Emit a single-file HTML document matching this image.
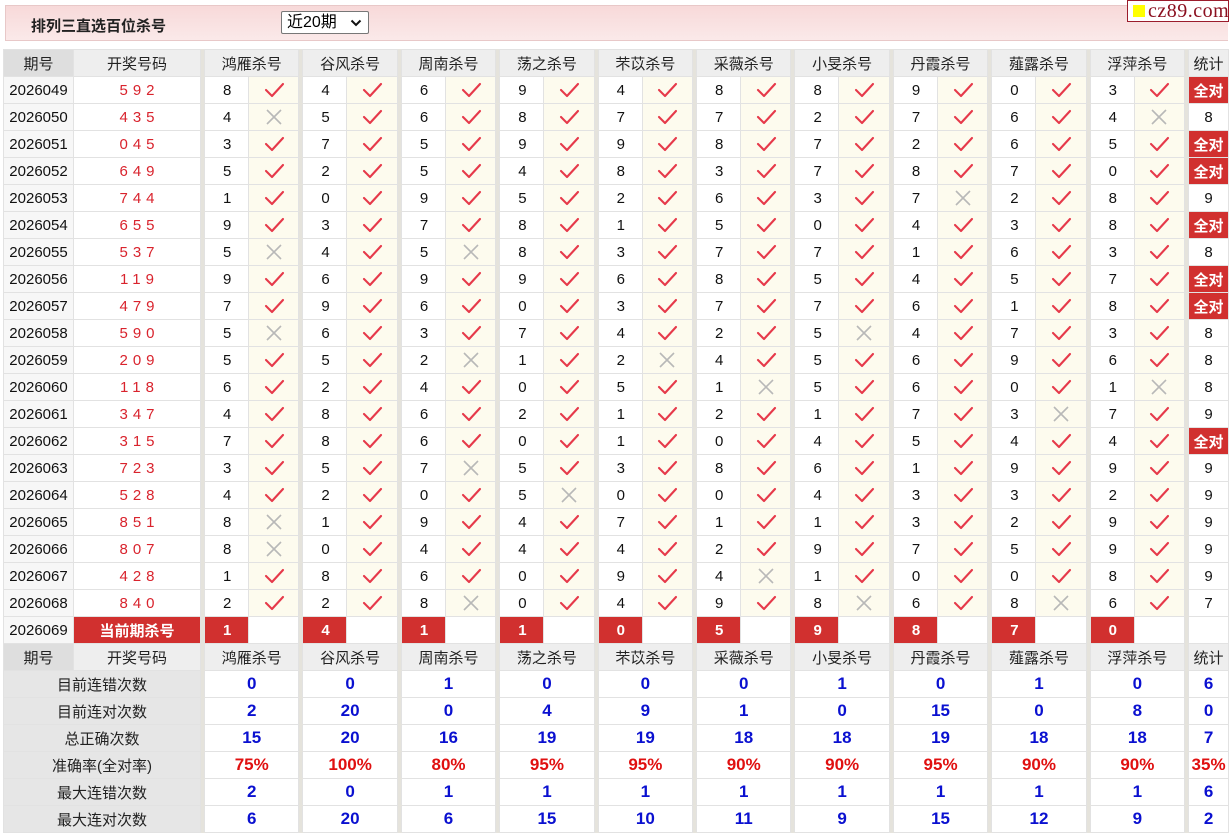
<!DOCTYPE html>
<html><head><meta charset="utf-8">
<style>
body{margin:0;background:#fff;font-family:"Liberation Sans","Noto Sans CJK SC",sans-serif;width:1231px;height:833px;overflow:hidden;position:relative}
.top{position:absolute;left:5px;top:5px;width:1222px;height:34px;background:linear-gradient(#f7d9d9,#fbe9e9);border:1px solid #e8c8c8;border-right:none}
.title{position:absolute;left:25px;top:9px;font-weight:bold;font-size:15px;color:#222}
.sel{position:absolute;left:275px;top:5px;border:1px solid #777;background:#fff;border-radius:2px;font-size:16px;line-height:21px;padding-left:5px;box-sizing:border-box;width:88px;height:23px}
.sel svg{position:absolute;right:6px;top:7px}
.logo{position:absolute;left:1127px;top:0;width:100px;height:20px;border:1px solid #9b1c2c;background:#fff;font-family:"Liberation Serif",serif;font-size:20px;color:#8b1020;line-height:20px;letter-spacing:0.5px;white-space:nowrap}
.logo i{display:inline-block;width:12px;height:12px;background:#ff0;margin:0 3px 0 5px}
table{position:absolute;left:3px;top:49px;border-collapse:collapse;table-layout:fixed;width:1225px}
td{border:1px solid #e2e2e2;height:26px;padding:0;font-size:15px;color:#111;text-align:center;overflow:hidden;white-space:nowrap}
td.p{background:#f7f7f7}
td.d{color:#d9232d;letter-spacing:5px;padding-left:5px}
td.g{background:#e5e3dc;border-top-color:#e5e3dc;border-bottom-color:#e5e3dc}
td.n{text-align:left;padding-left:18px}
td.i{background:#fdfbee}
td.i svg{width:24px;height:20px;vertical-align:middle}
tr.h td{background:#eeeeee;color:#222}
tr.h td.q{background:#dedede}
tr.h td.g{background:#e5e3dc}
td.a{background:#d1302f;color:#fff;font-weight:bold}
td.c{background:#d1302f;color:#fff;font-weight:bold;text-align:left;padding-left:18px}
td.l{background:#e6e6e6;color:#222}
td.s{color:#0a10d0;font-weight:bold;font-size:17px}
td.r{color:#e01010;font-weight:bold;font-size:17px}
</style></head><body>
<svg width="0" height="0" style="position:absolute"><defs>
<symbol id="k" viewBox="0 0 24 20"><path d="M4 10 L10 16 L21 4" fill="none" stroke="#e6394a" stroke-width="2.1" stroke-linecap="round" stroke-linejoin="round"/></symbol>
<symbol id="x" viewBox="0 0 24 20"><path d="M5 3 L19 17 M19 3 L5 17" fill="none" stroke="#b8b8b8" stroke-width="1.6"/></symbol>
</defs></svg>
<div class="top"><div class="title">排列三直选百位杀号</div><div class="sel">近20期<svg width="12" height="8" viewBox="0 0 12 8"><path d="M1.5 1.5 L6 6 L10.5 1.5" fill="none" stroke="#111" stroke-width="2"/></svg></div></div>
<div class="logo"><i></i>cz89.com</div>
<table>
<colgroup><col style="width:70px"><col style="width:127px"><col style="width:4px">
<col style="width:44px"><col style="width:50.4px"><col style="width:4px">
<col style="width:44px"><col style="width:50.4px"><col style="width:4px">
<col style="width:44px"><col style="width:50.4px"><col style="width:4px">
<col style="width:44px"><col style="width:50.4px"><col style="width:4px">
<col style="width:44px"><col style="width:50.4px"><col style="width:4px">
<col style="width:44px"><col style="width:50.4px"><col style="width:4px">
<col style="width:44px"><col style="width:50.4px"><col style="width:4px">
<col style="width:44px"><col style="width:50.4px"><col style="width:4px">
<col style="width:44px"><col style="width:50.4px"><col style="width:4px">
<col style="width:44px"><col style="width:50.4px"><col style="width:4px">
<col style="width:40px"></colgroup>
<tr class="h"><td class="q">期号</td><td>开奖号码</td><td class="g"></td><td colspan="2">鸿雁杀号</td><td class="g"></td><td colspan="2">谷风杀号</td><td class="g"></td><td colspan="2">周南杀号</td><td class="g"></td><td colspan="2">荡之杀号</td><td class="g"></td><td colspan="2">芣苡杀号</td><td class="g"></td><td colspan="2">采薇杀号</td><td class="g"></td><td colspan="2">小旻杀号</td><td class="g"></td><td colspan="2">丹霞杀号</td><td class="g"></td><td colspan="2">薤露杀号</td><td class="g"></td><td colspan="2">浮萍杀号</td><td class="g"></td><td>统计</td></tr>
<tr><td class="p">2026049</td><td class="d">592</td><td class="g"></td><td class="n">8</td><td class="i"><svg><use href="#k"/></svg></td><td class="g"></td><td class="n">4</td><td class="i"><svg><use href="#k"/></svg></td><td class="g"></td><td class="n">6</td><td class="i"><svg><use href="#k"/></svg></td><td class="g"></td><td class="n">9</td><td class="i"><svg><use href="#k"/></svg></td><td class="g"></td><td class="n">4</td><td class="i"><svg><use href="#k"/></svg></td><td class="g"></td><td class="n">8</td><td class="i"><svg><use href="#k"/></svg></td><td class="g"></td><td class="n">8</td><td class="i"><svg><use href="#k"/></svg></td><td class="g"></td><td class="n">9</td><td class="i"><svg><use href="#k"/></svg></td><td class="g"></td><td class="n">0</td><td class="i"><svg><use href="#k"/></svg></td><td class="g"></td><td class="n">3</td><td class="i"><svg><use href="#k"/></svg></td><td class="g"></td><td class="a">全对</td></tr>
<tr><td class="p">2026050</td><td class="d">435</td><td class="g"></td><td class="n">4</td><td class="i"><svg><use href="#x"/></svg></td><td class="g"></td><td class="n">5</td><td class="i"><svg><use href="#k"/></svg></td><td class="g"></td><td class="n">6</td><td class="i"><svg><use href="#k"/></svg></td><td class="g"></td><td class="n">8</td><td class="i"><svg><use href="#k"/></svg></td><td class="g"></td><td class="n">7</td><td class="i"><svg><use href="#k"/></svg></td><td class="g"></td><td class="n">7</td><td class="i"><svg><use href="#k"/></svg></td><td class="g"></td><td class="n">2</td><td class="i"><svg><use href="#k"/></svg></td><td class="g"></td><td class="n">7</td><td class="i"><svg><use href="#k"/></svg></td><td class="g"></td><td class="n">6</td><td class="i"><svg><use href="#k"/></svg></td><td class="g"></td><td class="n">4</td><td class="i"><svg><use href="#x"/></svg></td><td class="g"></td><td>8</td></tr>
<tr><td class="p">2026051</td><td class="d">045</td><td class="g"></td><td class="n">3</td><td class="i"><svg><use href="#k"/></svg></td><td class="g"></td><td class="n">7</td><td class="i"><svg><use href="#k"/></svg></td><td class="g"></td><td class="n">5</td><td class="i"><svg><use href="#k"/></svg></td><td class="g"></td><td class="n">9</td><td class="i"><svg><use href="#k"/></svg></td><td class="g"></td><td class="n">9</td><td class="i"><svg><use href="#k"/></svg></td><td class="g"></td><td class="n">8</td><td class="i"><svg><use href="#k"/></svg></td><td class="g"></td><td class="n">7</td><td class="i"><svg><use href="#k"/></svg></td><td class="g"></td><td class="n">2</td><td class="i"><svg><use href="#k"/></svg></td><td class="g"></td><td class="n">6</td><td class="i"><svg><use href="#k"/></svg></td><td class="g"></td><td class="n">5</td><td class="i"><svg><use href="#k"/></svg></td><td class="g"></td><td class="a">全对</td></tr>
<tr><td class="p">2026052</td><td class="d">649</td><td class="g"></td><td class="n">5</td><td class="i"><svg><use href="#k"/></svg></td><td class="g"></td><td class="n">2</td><td class="i"><svg><use href="#k"/></svg></td><td class="g"></td><td class="n">5</td><td class="i"><svg><use href="#k"/></svg></td><td class="g"></td><td class="n">4</td><td class="i"><svg><use href="#k"/></svg></td><td class="g"></td><td class="n">8</td><td class="i"><svg><use href="#k"/></svg></td><td class="g"></td><td class="n">3</td><td class="i"><svg><use href="#k"/></svg></td><td class="g"></td><td class="n">7</td><td class="i"><svg><use href="#k"/></svg></td><td class="g"></td><td class="n">8</td><td class="i"><svg><use href="#k"/></svg></td><td class="g"></td><td class="n">7</td><td class="i"><svg><use href="#k"/></svg></td><td class="g"></td><td class="n">0</td><td class="i"><svg><use href="#k"/></svg></td><td class="g"></td><td class="a">全对</td></tr>
<tr><td class="p">2026053</td><td class="d">744</td><td class="g"></td><td class="n">1</td><td class="i"><svg><use href="#k"/></svg></td><td class="g"></td><td class="n">0</td><td class="i"><svg><use href="#k"/></svg></td><td class="g"></td><td class="n">9</td><td class="i"><svg><use href="#k"/></svg></td><td class="g"></td><td class="n">5</td><td class="i"><svg><use href="#k"/></svg></td><td class="g"></td><td class="n">2</td><td class="i"><svg><use href="#k"/></svg></td><td class="g"></td><td class="n">6</td><td class="i"><svg><use href="#k"/></svg></td><td class="g"></td><td class="n">3</td><td class="i"><svg><use href="#k"/></svg></td><td class="g"></td><td class="n">7</td><td class="i"><svg><use href="#x"/></svg></td><td class="g"></td><td class="n">2</td><td class="i"><svg><use href="#k"/></svg></td><td class="g"></td><td class="n">8</td><td class="i"><svg><use href="#k"/></svg></td><td class="g"></td><td>9</td></tr>
<tr><td class="p">2026054</td><td class="d">655</td><td class="g"></td><td class="n">9</td><td class="i"><svg><use href="#k"/></svg></td><td class="g"></td><td class="n">3</td><td class="i"><svg><use href="#k"/></svg></td><td class="g"></td><td class="n">7</td><td class="i"><svg><use href="#k"/></svg></td><td class="g"></td><td class="n">8</td><td class="i"><svg><use href="#k"/></svg></td><td class="g"></td><td class="n">1</td><td class="i"><svg><use href="#k"/></svg></td><td class="g"></td><td class="n">5</td><td class="i"><svg><use href="#k"/></svg></td><td class="g"></td><td class="n">0</td><td class="i"><svg><use href="#k"/></svg></td><td class="g"></td><td class="n">4</td><td class="i"><svg><use href="#k"/></svg></td><td class="g"></td><td class="n">3</td><td class="i"><svg><use href="#k"/></svg></td><td class="g"></td><td class="n">8</td><td class="i"><svg><use href="#k"/></svg></td><td class="g"></td><td class="a">全对</td></tr>
<tr><td class="p">2026055</td><td class="d">537</td><td class="g"></td><td class="n">5</td><td class="i"><svg><use href="#x"/></svg></td><td class="g"></td><td class="n">4</td><td class="i"><svg><use href="#k"/></svg></td><td class="g"></td><td class="n">5</td><td class="i"><svg><use href="#x"/></svg></td><td class="g"></td><td class="n">8</td><td class="i"><svg><use href="#k"/></svg></td><td class="g"></td><td class="n">3</td><td class="i"><svg><use href="#k"/></svg></td><td class="g"></td><td class="n">7</td><td class="i"><svg><use href="#k"/></svg></td><td class="g"></td><td class="n">7</td><td class="i"><svg><use href="#k"/></svg></td><td class="g"></td><td class="n">1</td><td class="i"><svg><use href="#k"/></svg></td><td class="g"></td><td class="n">6</td><td class="i"><svg><use href="#k"/></svg></td><td class="g"></td><td class="n">3</td><td class="i"><svg><use href="#k"/></svg></td><td class="g"></td><td>8</td></tr>
<tr><td class="p">2026056</td><td class="d">119</td><td class="g"></td><td class="n">9</td><td class="i"><svg><use href="#k"/></svg></td><td class="g"></td><td class="n">6</td><td class="i"><svg><use href="#k"/></svg></td><td class="g"></td><td class="n">9</td><td class="i"><svg><use href="#k"/></svg></td><td class="g"></td><td class="n">9</td><td class="i"><svg><use href="#k"/></svg></td><td class="g"></td><td class="n">6</td><td class="i"><svg><use href="#k"/></svg></td><td class="g"></td><td class="n">8</td><td class="i"><svg><use href="#k"/></svg></td><td class="g"></td><td class="n">5</td><td class="i"><svg><use href="#k"/></svg></td><td class="g"></td><td class="n">4</td><td class="i"><svg><use href="#k"/></svg></td><td class="g"></td><td class="n">5</td><td class="i"><svg><use href="#k"/></svg></td><td class="g"></td><td class="n">7</td><td class="i"><svg><use href="#k"/></svg></td><td class="g"></td><td class="a">全对</td></tr>
<tr><td class="p">2026057</td><td class="d">479</td><td class="g"></td><td class="n">7</td><td class="i"><svg><use href="#k"/></svg></td><td class="g"></td><td class="n">9</td><td class="i"><svg><use href="#k"/></svg></td><td class="g"></td><td class="n">6</td><td class="i"><svg><use href="#k"/></svg></td><td class="g"></td><td class="n">0</td><td class="i"><svg><use href="#k"/></svg></td><td class="g"></td><td class="n">3</td><td class="i"><svg><use href="#k"/></svg></td><td class="g"></td><td class="n">7</td><td class="i"><svg><use href="#k"/></svg></td><td class="g"></td><td class="n">7</td><td class="i"><svg><use href="#k"/></svg></td><td class="g"></td><td class="n">6</td><td class="i"><svg><use href="#k"/></svg></td><td class="g"></td><td class="n">1</td><td class="i"><svg><use href="#k"/></svg></td><td class="g"></td><td class="n">8</td><td class="i"><svg><use href="#k"/></svg></td><td class="g"></td><td class="a">全对</td></tr>
<tr><td class="p">2026058</td><td class="d">590</td><td class="g"></td><td class="n">5</td><td class="i"><svg><use href="#x"/></svg></td><td class="g"></td><td class="n">6</td><td class="i"><svg><use href="#k"/></svg></td><td class="g"></td><td class="n">3</td><td class="i"><svg><use href="#k"/></svg></td><td class="g"></td><td class="n">7</td><td class="i"><svg><use href="#k"/></svg></td><td class="g"></td><td class="n">4</td><td class="i"><svg><use href="#k"/></svg></td><td class="g"></td><td class="n">2</td><td class="i"><svg><use href="#k"/></svg></td><td class="g"></td><td class="n">5</td><td class="i"><svg><use href="#x"/></svg></td><td class="g"></td><td class="n">4</td><td class="i"><svg><use href="#k"/></svg></td><td class="g"></td><td class="n">7</td><td class="i"><svg><use href="#k"/></svg></td><td class="g"></td><td class="n">3</td><td class="i"><svg><use href="#k"/></svg></td><td class="g"></td><td>8</td></tr>
<tr><td class="p">2026059</td><td class="d">209</td><td class="g"></td><td class="n">5</td><td class="i"><svg><use href="#k"/></svg></td><td class="g"></td><td class="n">5</td><td class="i"><svg><use href="#k"/></svg></td><td class="g"></td><td class="n">2</td><td class="i"><svg><use href="#x"/></svg></td><td class="g"></td><td class="n">1</td><td class="i"><svg><use href="#k"/></svg></td><td class="g"></td><td class="n">2</td><td class="i"><svg><use href="#x"/></svg></td><td class="g"></td><td class="n">4</td><td class="i"><svg><use href="#k"/></svg></td><td class="g"></td><td class="n">5</td><td class="i"><svg><use href="#k"/></svg></td><td class="g"></td><td class="n">6</td><td class="i"><svg><use href="#k"/></svg></td><td class="g"></td><td class="n">9</td><td class="i"><svg><use href="#k"/></svg></td><td class="g"></td><td class="n">6</td><td class="i"><svg><use href="#k"/></svg></td><td class="g"></td><td>8</td></tr>
<tr><td class="p">2026060</td><td class="d">118</td><td class="g"></td><td class="n">6</td><td class="i"><svg><use href="#k"/></svg></td><td class="g"></td><td class="n">2</td><td class="i"><svg><use href="#k"/></svg></td><td class="g"></td><td class="n">4</td><td class="i"><svg><use href="#k"/></svg></td><td class="g"></td><td class="n">0</td><td class="i"><svg><use href="#k"/></svg></td><td class="g"></td><td class="n">5</td><td class="i"><svg><use href="#k"/></svg></td><td class="g"></td><td class="n">1</td><td class="i"><svg><use href="#x"/></svg></td><td class="g"></td><td class="n">5</td><td class="i"><svg><use href="#k"/></svg></td><td class="g"></td><td class="n">6</td><td class="i"><svg><use href="#k"/></svg></td><td class="g"></td><td class="n">0</td><td class="i"><svg><use href="#k"/></svg></td><td class="g"></td><td class="n">1</td><td class="i"><svg><use href="#x"/></svg></td><td class="g"></td><td>8</td></tr>
<tr><td class="p">2026061</td><td class="d">347</td><td class="g"></td><td class="n">4</td><td class="i"><svg><use href="#k"/></svg></td><td class="g"></td><td class="n">8</td><td class="i"><svg><use href="#k"/></svg></td><td class="g"></td><td class="n">6</td><td class="i"><svg><use href="#k"/></svg></td><td class="g"></td><td class="n">2</td><td class="i"><svg><use href="#k"/></svg></td><td class="g"></td><td class="n">1</td><td class="i"><svg><use href="#k"/></svg></td><td class="g"></td><td class="n">2</td><td class="i"><svg><use href="#k"/></svg></td><td class="g"></td><td class="n">1</td><td class="i"><svg><use href="#k"/></svg></td><td class="g"></td><td class="n">7</td><td class="i"><svg><use href="#k"/></svg></td><td class="g"></td><td class="n">3</td><td class="i"><svg><use href="#x"/></svg></td><td class="g"></td><td class="n">7</td><td class="i"><svg><use href="#k"/></svg></td><td class="g"></td><td>9</td></tr>
<tr><td class="p">2026062</td><td class="d">315</td><td class="g"></td><td class="n">7</td><td class="i"><svg><use href="#k"/></svg></td><td class="g"></td><td class="n">8</td><td class="i"><svg><use href="#k"/></svg></td><td class="g"></td><td class="n">6</td><td class="i"><svg><use href="#k"/></svg></td><td class="g"></td><td class="n">0</td><td class="i"><svg><use href="#k"/></svg></td><td class="g"></td><td class="n">1</td><td class="i"><svg><use href="#k"/></svg></td><td class="g"></td><td class="n">0</td><td class="i"><svg><use href="#k"/></svg></td><td class="g"></td><td class="n">4</td><td class="i"><svg><use href="#k"/></svg></td><td class="g"></td><td class="n">5</td><td class="i"><svg><use href="#k"/></svg></td><td class="g"></td><td class="n">4</td><td class="i"><svg><use href="#k"/></svg></td><td class="g"></td><td class="n">4</td><td class="i"><svg><use href="#k"/></svg></td><td class="g"></td><td class="a">全对</td></tr>
<tr><td class="p">2026063</td><td class="d">723</td><td class="g"></td><td class="n">3</td><td class="i"><svg><use href="#k"/></svg></td><td class="g"></td><td class="n">5</td><td class="i"><svg><use href="#k"/></svg></td><td class="g"></td><td class="n">7</td><td class="i"><svg><use href="#x"/></svg></td><td class="g"></td><td class="n">5</td><td class="i"><svg><use href="#k"/></svg></td><td class="g"></td><td class="n">3</td><td class="i"><svg><use href="#k"/></svg></td><td class="g"></td><td class="n">8</td><td class="i"><svg><use href="#k"/></svg></td><td class="g"></td><td class="n">6</td><td class="i"><svg><use href="#k"/></svg></td><td class="g"></td><td class="n">1</td><td class="i"><svg><use href="#k"/></svg></td><td class="g"></td><td class="n">9</td><td class="i"><svg><use href="#k"/></svg></td><td class="g"></td><td class="n">9</td><td class="i"><svg><use href="#k"/></svg></td><td class="g"></td><td>9</td></tr>
<tr><td class="p">2026064</td><td class="d">528</td><td class="g"></td><td class="n">4</td><td class="i"><svg><use href="#k"/></svg></td><td class="g"></td><td class="n">2</td><td class="i"><svg><use href="#k"/></svg></td><td class="g"></td><td class="n">0</td><td class="i"><svg><use href="#k"/></svg></td><td class="g"></td><td class="n">5</td><td class="i"><svg><use href="#x"/></svg></td><td class="g"></td><td class="n">0</td><td class="i"><svg><use href="#k"/></svg></td><td class="g"></td><td class="n">0</td><td class="i"><svg><use href="#k"/></svg></td><td class="g"></td><td class="n">4</td><td class="i"><svg><use href="#k"/></svg></td><td class="g"></td><td class="n">3</td><td class="i"><svg><use href="#k"/></svg></td><td class="g"></td><td class="n">3</td><td class="i"><svg><use href="#k"/></svg></td><td class="g"></td><td class="n">2</td><td class="i"><svg><use href="#k"/></svg></td><td class="g"></td><td>9</td></tr>
<tr><td class="p">2026065</td><td class="d">851</td><td class="g"></td><td class="n">8</td><td class="i"><svg><use href="#x"/></svg></td><td class="g"></td><td class="n">1</td><td class="i"><svg><use href="#k"/></svg></td><td class="g"></td><td class="n">9</td><td class="i"><svg><use href="#k"/></svg></td><td class="g"></td><td class="n">4</td><td class="i"><svg><use href="#k"/></svg></td><td class="g"></td><td class="n">7</td><td class="i"><svg><use href="#k"/></svg></td><td class="g"></td><td class="n">1</td><td class="i"><svg><use href="#k"/></svg></td><td class="g"></td><td class="n">1</td><td class="i"><svg><use href="#k"/></svg></td><td class="g"></td><td class="n">3</td><td class="i"><svg><use href="#k"/></svg></td><td class="g"></td><td class="n">2</td><td class="i"><svg><use href="#k"/></svg></td><td class="g"></td><td class="n">9</td><td class="i"><svg><use href="#k"/></svg></td><td class="g"></td><td>9</td></tr>
<tr><td class="p">2026066</td><td class="d">807</td><td class="g"></td><td class="n">8</td><td class="i"><svg><use href="#x"/></svg></td><td class="g"></td><td class="n">0</td><td class="i"><svg><use href="#k"/></svg></td><td class="g"></td><td class="n">4</td><td class="i"><svg><use href="#k"/></svg></td><td class="g"></td><td class="n">4</td><td class="i"><svg><use href="#k"/></svg></td><td class="g"></td><td class="n">4</td><td class="i"><svg><use href="#k"/></svg></td><td class="g"></td><td class="n">2</td><td class="i"><svg><use href="#k"/></svg></td><td class="g"></td><td class="n">9</td><td class="i"><svg><use href="#k"/></svg></td><td class="g"></td><td class="n">7</td><td class="i"><svg><use href="#k"/></svg></td><td class="g"></td><td class="n">5</td><td class="i"><svg><use href="#k"/></svg></td><td class="g"></td><td class="n">9</td><td class="i"><svg><use href="#k"/></svg></td><td class="g"></td><td>9</td></tr>
<tr><td class="p">2026067</td><td class="d">428</td><td class="g"></td><td class="n">1</td><td class="i"><svg><use href="#k"/></svg></td><td class="g"></td><td class="n">8</td><td class="i"><svg><use href="#k"/></svg></td><td class="g"></td><td class="n">6</td><td class="i"><svg><use href="#k"/></svg></td><td class="g"></td><td class="n">0</td><td class="i"><svg><use href="#k"/></svg></td><td class="g"></td><td class="n">9</td><td class="i"><svg><use href="#k"/></svg></td><td class="g"></td><td class="n">4</td><td class="i"><svg><use href="#x"/></svg></td><td class="g"></td><td class="n">1</td><td class="i"><svg><use href="#k"/></svg></td><td class="g"></td><td class="n">0</td><td class="i"><svg><use href="#k"/></svg></td><td class="g"></td><td class="n">0</td><td class="i"><svg><use href="#k"/></svg></td><td class="g"></td><td class="n">8</td><td class="i"><svg><use href="#k"/></svg></td><td class="g"></td><td>9</td></tr>
<tr><td class="p">2026068</td><td class="d">840</td><td class="g"></td><td class="n">2</td><td class="i"><svg><use href="#k"/></svg></td><td class="g"></td><td class="n">2</td><td class="i"><svg><use href="#k"/></svg></td><td class="g"></td><td class="n">8</td><td class="i"><svg><use href="#x"/></svg></td><td class="g"></td><td class="n">0</td><td class="i"><svg><use href="#k"/></svg></td><td class="g"></td><td class="n">4</td><td class="i"><svg><use href="#k"/></svg></td><td class="g"></td><td class="n">9</td><td class="i"><svg><use href="#k"/></svg></td><td class="g"></td><td class="n">8</td><td class="i"><svg><use href="#x"/></svg></td><td class="g"></td><td class="n">6</td><td class="i"><svg><use href="#k"/></svg></td><td class="g"></td><td class="n">8</td><td class="i"><svg><use href="#x"/></svg></td><td class="g"></td><td class="n">6</td><td class="i"><svg><use href="#k"/></svg></td><td class="g"></td><td>7</td></tr>
<tr><td class="p">2026069</td><td class="a">当前期杀号</td><td class="g"></td><td class="c">1</td><td></td><td class="g"></td><td class="c">4</td><td></td><td class="g"></td><td class="c">1</td><td></td><td class="g"></td><td class="c">1</td><td></td><td class="g"></td><td class="c">0</td><td></td><td class="g"></td><td class="c">5</td><td></td><td class="g"></td><td class="c">9</td><td></td><td class="g"></td><td class="c">8</td><td></td><td class="g"></td><td class="c">7</td><td></td><td class="g"></td><td class="c">0</td><td></td><td class="g"></td><td></td></tr>
<tr class="h"><td class="q">期号</td><td>开奖号码</td><td class="g"></td><td colspan="2">鸿雁杀号</td><td class="g"></td><td colspan="2">谷风杀号</td><td class="g"></td><td colspan="2">周南杀号</td><td class="g"></td><td colspan="2">荡之杀号</td><td class="g"></td><td colspan="2">芣苡杀号</td><td class="g"></td><td colspan="2">采薇杀号</td><td class="g"></td><td colspan="2">小旻杀号</td><td class="g"></td><td colspan="2">丹霞杀号</td><td class="g"></td><td colspan="2">薤露杀号</td><td class="g"></td><td colspan="2">浮萍杀号</td><td class="g"></td><td>统计</td></tr>
<tr><td class="l" colspan="2">目前连错次数</td><td class="g"></td><td class="s" colspan="2">0</td><td class="g"></td><td class="s" colspan="2">0</td><td class="g"></td><td class="s" colspan="2">1</td><td class="g"></td><td class="s" colspan="2">0</td><td class="g"></td><td class="s" colspan="2">0</td><td class="g"></td><td class="s" colspan="2">0</td><td class="g"></td><td class="s" colspan="2">1</td><td class="g"></td><td class="s" colspan="2">0</td><td class="g"></td><td class="s" colspan="2">1</td><td class="g"></td><td class="s" colspan="2">0</td><td class="g"></td><td class="s">6</td></tr>
<tr><td class="l" colspan="2">目前连对次数</td><td class="g"></td><td class="s" colspan="2">2</td><td class="g"></td><td class="s" colspan="2">20</td><td class="g"></td><td class="s" colspan="2">0</td><td class="g"></td><td class="s" colspan="2">4</td><td class="g"></td><td class="s" colspan="2">9</td><td class="g"></td><td class="s" colspan="2">1</td><td class="g"></td><td class="s" colspan="2">0</td><td class="g"></td><td class="s" colspan="2">15</td><td class="g"></td><td class="s" colspan="2">0</td><td class="g"></td><td class="s" colspan="2">8</td><td class="g"></td><td class="s">0</td></tr>
<tr><td class="l" colspan="2">总正确次数</td><td class="g"></td><td class="s" colspan="2">15</td><td class="g"></td><td class="s" colspan="2">20</td><td class="g"></td><td class="s" colspan="2">16</td><td class="g"></td><td class="s" colspan="2">19</td><td class="g"></td><td class="s" colspan="2">19</td><td class="g"></td><td class="s" colspan="2">18</td><td class="g"></td><td class="s" colspan="2">18</td><td class="g"></td><td class="s" colspan="2">19</td><td class="g"></td><td class="s" colspan="2">18</td><td class="g"></td><td class="s" colspan="2">18</td><td class="g"></td><td class="s">7</td></tr>
<tr><td class="l" colspan="2">准确率(全对率)</td><td class="g"></td><td class="r" colspan="2">75%</td><td class="g"></td><td class="r" colspan="2">100%</td><td class="g"></td><td class="r" colspan="2">80%</td><td class="g"></td><td class="r" colspan="2">95%</td><td class="g"></td><td class="r" colspan="2">95%</td><td class="g"></td><td class="r" colspan="2">90%</td><td class="g"></td><td class="r" colspan="2">90%</td><td class="g"></td><td class="r" colspan="2">95%</td><td class="g"></td><td class="r" colspan="2">90%</td><td class="g"></td><td class="r" colspan="2">90%</td><td class="g"></td><td class="r">35%</td></tr>
<tr><td class="l" colspan="2">最大连错次数</td><td class="g"></td><td class="s" colspan="2">2</td><td class="g"></td><td class="s" colspan="2">0</td><td class="g"></td><td class="s" colspan="2">1</td><td class="g"></td><td class="s" colspan="2">1</td><td class="g"></td><td class="s" colspan="2">1</td><td class="g"></td><td class="s" colspan="2">1</td><td class="g"></td><td class="s" colspan="2">1</td><td class="g"></td><td class="s" colspan="2">1</td><td class="g"></td><td class="s" colspan="2">1</td><td class="g"></td><td class="s" colspan="2">1</td><td class="g"></td><td class="s">6</td></tr>
<tr><td class="l" colspan="2">最大连对次数</td><td class="g"></td><td class="s" colspan="2">6</td><td class="g"></td><td class="s" colspan="2">20</td><td class="g"></td><td class="s" colspan="2">6</td><td class="g"></td><td class="s" colspan="2">15</td><td class="g"></td><td class="s" colspan="2">10</td><td class="g"></td><td class="s" colspan="2">11</td><td class="g"></td><td class="s" colspan="2">9</td><td class="g"></td><td class="s" colspan="2">15</td><td class="g"></td><td class="s" colspan="2">12</td><td class="g"></td><td class="s" colspan="2">9</td><td class="g"></td><td class="s">2</td></tr>
</table>
</body></html>
